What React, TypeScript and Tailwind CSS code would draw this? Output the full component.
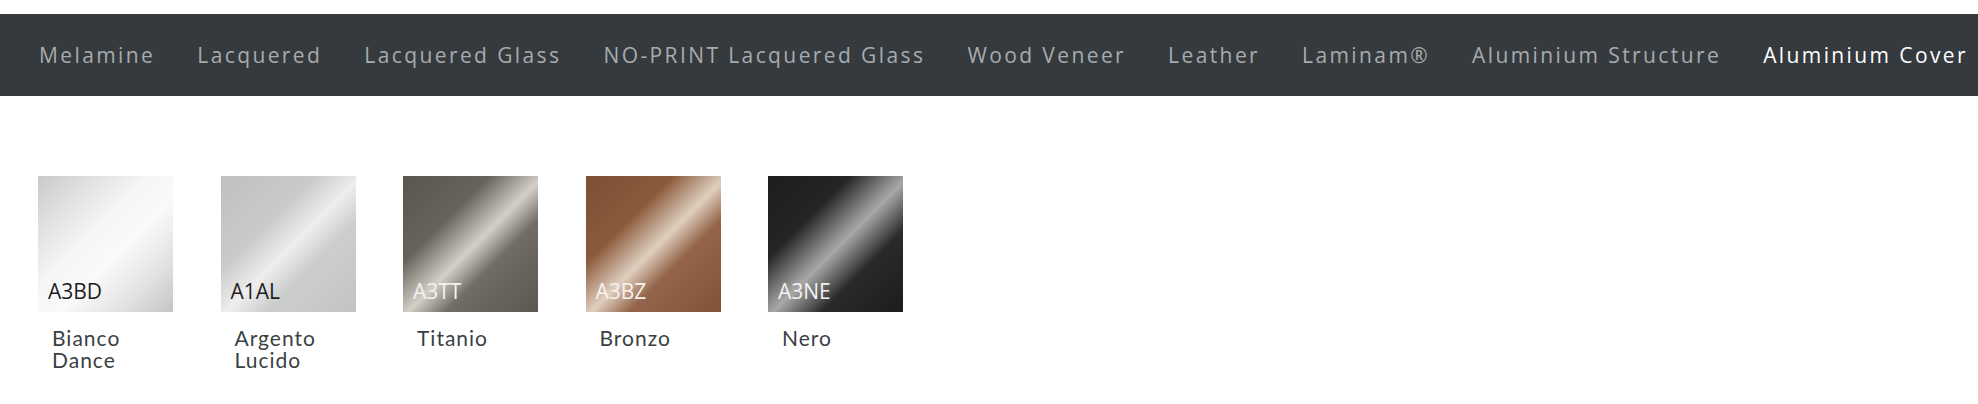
// Aluminium Cover finishes: tab bar plus swatch grid

const tabs = [
  'Melamine',
  'Lacquered',
  'Lacquered Glass',
  'NO-PRINT Lacquered Glass',
  'Wood Veneer',
  'Leather',
  'Laminam®',
  'Aluminium Structure',
  'Aluminium Cover',
];

interface Finish {
  code: string;
  name: string;
  swatch: string;
  codeColor: string;
}

const finishes: Finish[] = [
  {
    code: 'A3BD',
    name: 'Bianco Dance',
    swatch:
      'bg-[linear-gradient(135deg,#c9c9c9_0%,#e2e2e2_22%,#f6f6f6_42%,#fafafa_58%,#e2e2e2_80%,#c4c4c4_100%)]',
    codeColor: 'text-[#1e1e1e]',
  },
  {
    code: 'A1AL',
    name: 'Argento Lucido',
    swatch:
      'bg-[linear-gradient(135deg,#bfc1c0_0%,#c9cbca_35%,#eeeeee_52%,#cdcfce_66%,#c2c4c3_100%)]',
    codeColor: 'text-[#1e1e1e]',
  },
  {
    code: 'A3TT',
    name: 'Titanio',
    swatch:
      'bg-[linear-gradient(135deg,#5a564f_0%,#67635c_32%,#d3cfc7_52%,#716d66_66%,#5a5650_100%)]',
    codeColor: 'text-[#f2f2f2]',
  },
  {
    code: 'A3BZ',
    name: 'Bronzo',
    swatch:
      'bg-[linear-gradient(135deg,#7c5035_0%,#8a5a3b_32%,#e0cfc0_52%,#93644a_66%,#805439_100%)]',
    codeColor: 'text-[#f7f2ee]',
  },
  {
    code: 'A3NE',
    name: 'Nero',
    swatch:
      'bg-[linear-gradient(135deg,#1d1d1d_0%,#242424_30%,#a8a8a8_52%,#2a2a2a_70%,#1c1c1c_100%)]',
    codeColor: 'text-[#f2f2f2]',
  },
];

export default function App() {
  const active = 'Aluminium Cover';

  return (
    <div className="min-h-screen bg-white pt-[14px] font-['Lato','Open_Sans',sans-serif]">
      {/* Tabs */}
      <nav className="flex h-[82px] items-center gap-[42px] overflow-hidden bg-[#353a3e] pl-[39px] font-['Open_Sans',sans-serif]">
        {tabs.map((tab) => (
          <span
            key={tab}
            className={`whitespace-nowrap pt-[2px] text-[21px] tracking-[2.4px] ${
              tab === active ? 'text-white' : 'text-[#a7abae]'
            }`}
          >
            {tab}
          </span>
        ))}
      </nav>

      {/* Swatches */}
      <div className="mt-[80px] flex gap-[47.5px] pl-[38px]">
        {finishes.map((f) => (
          <div key={f.code} className="w-[135px]">
            <div className={`relative h-[136px] w-[135px] ${f.swatch}`}>
              <span
                className={`absolute bottom-[10px] left-[10px] font-['Open_Sans',sans-serif] text-[21px] font-medium leading-none ${f.codeColor}`}
              >
                {f.code}
              </span>
            </div>
            <p className="mt-[15px] w-[104px] pl-[14px] text-[21px] leading-[22px] tracking-[1px] text-[#3a3f44]">
              {f.name}
            </p>
          </div>
        ))}
      </div>
    </div>
  );
}
